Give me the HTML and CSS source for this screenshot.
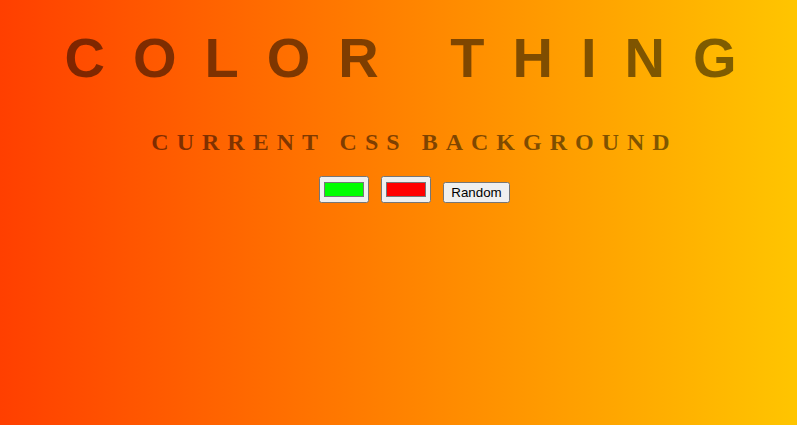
FILE: index.html
```html
<!DOCTYPE html>
<html lang="en">
<head>
<meta charset="utf-8">
<title>Color Thing</title>
<link rel="stylesheet" href="styles.css">
</head>
<body>
<main class="page">
  <h1 class="title">COLOR THING</h1>
  <h2 class="subtitle">CURRENT CSS BACKGROUND</h2>
  <div class="controls">
    <input class="swatch" type="color" value="#00ff00">
    <input class="swatch" type="color" value="#ff0000">
    <button class="random" type="button">Random</button>
  </div>
</main>
</body>
</html>
```
FILE: styles.css
```css
html, body {
  margin: 0;
  height: 100%;
}
body {
  background: linear-gradient(to right, #ff3f00, #ffc500);
  font-family: "Liberation Sans", Arial, sans-serif;
}
.page {
  padding: 26px 8px 0 40px;
  text-align: center;
}
.title {
  margin: 0;
  font: bold 56px/64px "Liberation Sans", Arial, sans-serif;
  letter-spacing: 28px;
  color: rgba(0, 0, 0, 0.5);
}
.subtitle {
  margin: 38px 0 0;
  font: bold 24px/28px "Liberation Serif", "Times New Roman", serif;
  letter-spacing: 8px;
  color: rgba(0, 0, 0, 0.5);
}
.controls {
  margin-top: 20px;
  display: flex;
  justify-content: center;
  align-items: flex-end;
  gap: 12px;
}
.swatch {
  width: 50px;
  height: 27px;
  margin: 0;
}
.random {
  margin: 0;
  font: 13.33px "Liberation Sans", Arial, sans-serif;
  height: 21px;
}
```
